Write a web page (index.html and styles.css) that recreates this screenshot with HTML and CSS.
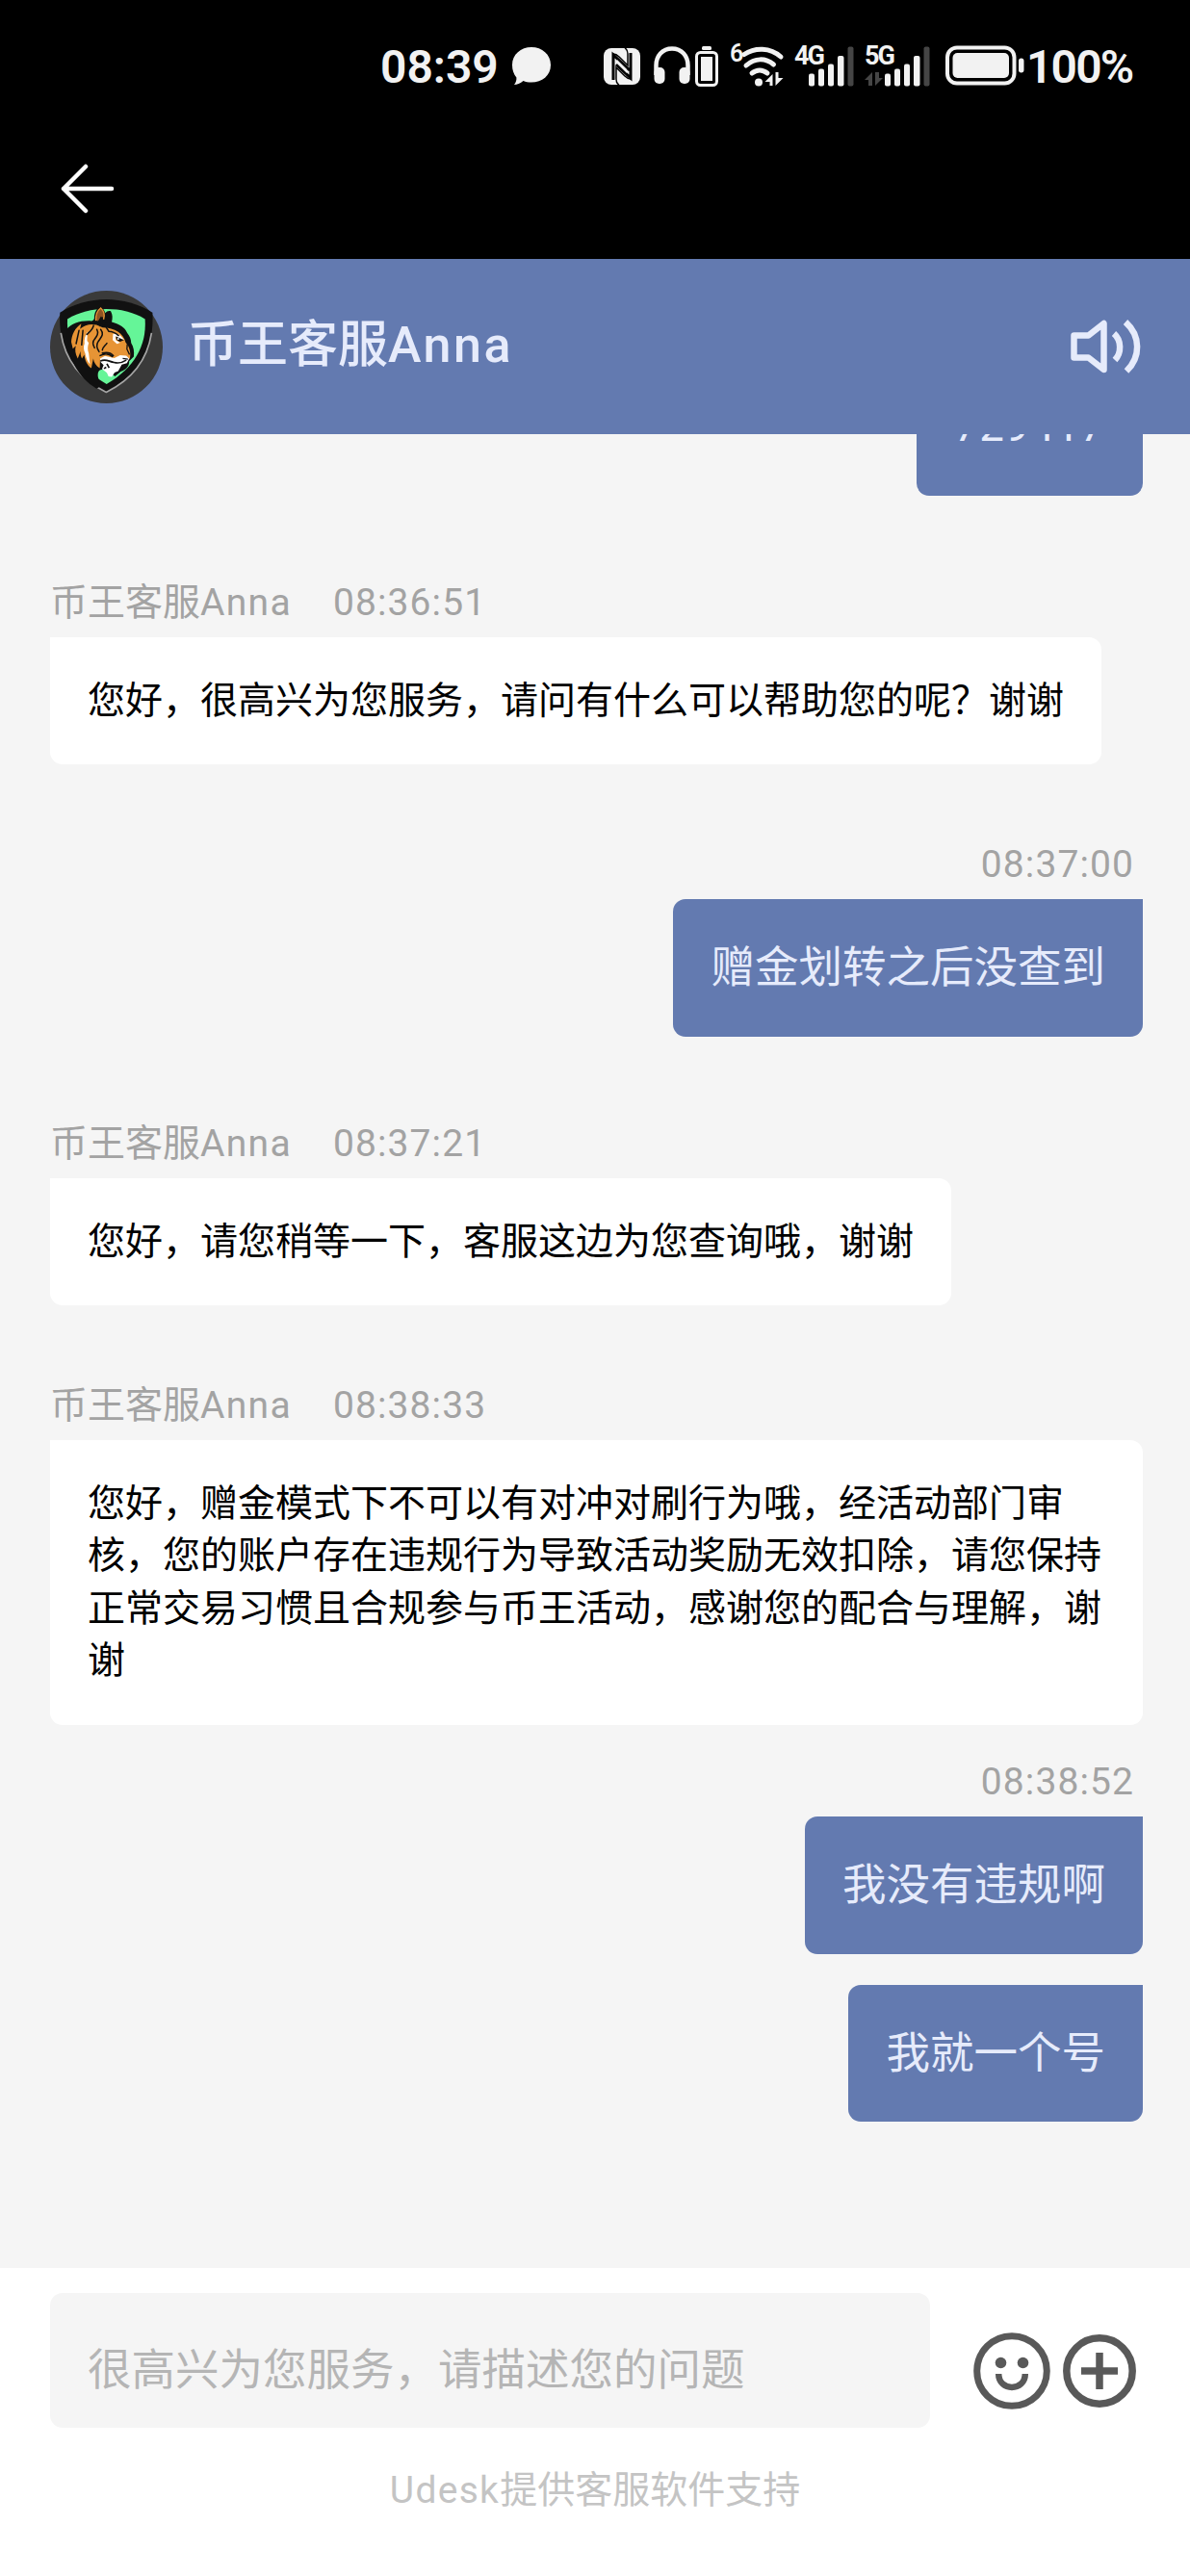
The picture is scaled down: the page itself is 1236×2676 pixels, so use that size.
FILE: index.html
```
<!DOCTYPE html>
<html lang="zh-CN">
<head>
    <meta charset="UTF-8">
    <meta name="viewport" content="width=device-width, initial-scale=1.0">
    <title>币王客服Anna</title>
    <link rel="stylesheet" href="styles.css">
</head>
<body>
    <div class="status-bar">
        <span class="clock">08:39</span>
        <svg class="icon-chat" width="42" height="42" viewBox="0 0 42 42"><path d="M21 2C32 2 41 9.500 41 20.500S32 38.500 21 38.500c-3.500 0-6-.5-8.500-1.500-3 2.500-6.500 4-9.500 4 2-2.500 2.600-4.800 2.400-7.500C2.500 30 1 25.500 1 20.500 1 9.500 10 2 21 2z" fill="#f2f2f2"/></svg>
        <svg class="icon-nfc" width="38" height="38" viewBox="0 0 38 38">
            <rect width="38" height="38" rx="8" fill="#f2f2f2"/>
            <path d="M10 33V7l17 16M28 5v26L13 17" fill="none" stroke="#000" stroke-width="3"/>
            <path d="M10 6c3 0 4 1 6 3l9 9V6c0-3-1-5-3-6M28 32c-3 0-4-1-6-3l-9-9v12c0 3 1 5 3 6" fill="none" stroke="#000" stroke-width="1.500"/>
            <path d="M14 12l10 10v4L14 16z" fill="#f2f2f2"/>
        </svg>
        <svg class="icon-headphones" width="38" height="40" viewBox="0 0 38 40">
            <path d="M2.500 30V20C2.500 10 9 2.500 19 2.500S35.500 10 35.500 20v10" fill="none" stroke="#f2f2f2" stroke-width="4.500"/>
            <rect x="0.500" y="22" width="11" height="17" rx="5" fill="#f2f2f2"/>
            <rect x="26.500" y="22" width="11" height="17" rx="5" fill="#f2f2f2"/>
        </svg>
        <svg class="icon-cell" width="26" height="44" viewBox="0 0 26 44">
            <rect x="8" y="1" width="10" height="4" rx="1.500" fill="#f2f2f2"/>
            <rect x="2.500" y="7.500" width="21" height="34" rx="4" fill="none" stroke="#f2f2f2" stroke-width="3"/>
            <rect x="7" y="12" width="12" height="25" fill="#f2f2f2"/>
        </svg>
        <span class="wifi-gen">6</span>
        <svg class="icon-wifi" width="46" height="44" viewBox="0 0 46 44">
            <g fill="none" stroke="#f2f2f2" stroke-width="5" stroke-linecap="round">
                <path d="M4 9.500C15 2 31 2 42 12"/>
                <path d="M6 21C15 13 26 13 34.500 20"/>
                <path d="M12 29c5-4 11-4 16 0" />
            </g>
            <circle cx="19" cy="38.500" r="4" fill="#f2f2f2"/>
            <path d="M33.500 42V30l-8 8h5v4zM36.500 28v14l8-8h-5v-6z" fill="#f2f2f2"/>
        </svg>
        <span class="net net-4g">4G</span>
        <svg class="icon-signal" width="47" height="42" viewBox="0 0 47 42">
            <rect x="0" y="28.500" width="6" height="13" rx="2" fill="#f2f2f2"/>
            <rect x="10" y="23.500" width="6" height="18" rx="2" fill="#f2f2f2"/>
            <rect x="20" y="18.500" width="6" height="23" rx="2" fill="#f2f2f2"/>
            <rect x="30" y="10" width="6.500" height="31.500" rx="2" fill="#f2f2f2"/>
            <rect x="40.500" y="0.500" width="6" height="41" rx="2" fill="#454545"/>
        </svg>
        <span class="net net-5g">5G
            <svg class="icon-updown" width="20" height="14" viewBox="0 0 20 14"><path d="M8 14V0L0 8h4v6zM11 0v14l8-8h-4V0z" fill="#454545"/></svg>
        </span>
        <svg class="icon-signal" width="47" height="42" viewBox="0 0 47 42">
            <rect x="0" y="28.500" width="6" height="13" rx="2" fill="#f2f2f2"/>
            <rect x="10" y="23.500" width="6" height="18" rx="2" fill="#f2f2f2"/>
            <rect x="20" y="18.500" width="6" height="23" rx="2" fill="#f2f2f2"/>
            <rect x="30" y="10" width="6.500" height="31.500" rx="2" fill="#f2f2f2"/>
            <rect x="40.500" y="0.500" width="6" height="41" rx="2" fill="#454545"/>
        </svg>
        <svg class="icon-battery" width="84" height="42" viewBox="0 0 84 42">
            <rect x="2" y="2.500" width="69.500" height="37" rx="10" fill="none" stroke="#f2f2f2" stroke-width="4"/>
            <rect x="7.500" y="8" width="58.500" height="26" rx="5" fill="#f2f2f2"/>
            <rect x="76" y="13.500" width="5.500" height="15" rx="2.700" fill="#f2f2f2"/>
        </svg>
        <span class="percent">100%</span>
    </div>

    <div class="nav-bar">
        <svg width="56" height="52" viewBox="0 0 56 52"><path d="M53 26H3M26 3L3 26l23 23" fill="none" stroke="#fff" stroke-width="4.500" stroke-linecap="round" stroke-linejoin="round"/></svg>
    </div>

    <header class="agent-bar">
        <svg class="avatar" width="117" height="117" viewBox="-22.500 -28.500 348 348">
            <circle cx="151.500" cy="145.500" r="174" fill="#3a3a3a"/>
            <!-- shield -->
            <path d="M8 39C50 12 100 -2 151 -2s101 14 143 41c6 108-40 198-143 247C48 237 2 147 8 39z" fill="#111"/>
            <path d="M11 102c12 78 56 142 140 183 84-41 128-105 140-183" fill="none" stroke="#a5a5a5" stroke-width="5"/>
            <path d="M31 59c36-22 76-31 120-31s84 9 120 31c5 83-33 150-119 201-86-51-124-118-121-201z" fill="#65f598"/>
            <!-- tiger -->
            <path d="M29 90c15-17 42-27 76-25 5-1 8-4 9-9 0-18 8-32 20-34 8 4 12 11 14 19 5-6 10-8 17-6 6 11 6 22 3 33 26 7 41 17 48 34 8 9 12 20 12 31 8 12 10 27 8 42l-14 14c0 16-10 26-26 32l-18 15-17-14c-19-12-31-7-35 2-3 14 2 26 15 38l-20 12C64 240 30 180 29 90z" fill="#101010"/>
            <path d="M43 130c1-24 12-44 31-57l-4 17c14-13 31-17 51-13l19 8c37 0 65 19 71 46 12 12 17 32 13 50l-16 7-28-3-27-9-21 10-1 25c-12-8-18-18-20-30l-6 30c-14-11-20-25-22-42l-7 12c-4-8-5-15-4-23l-9 23c-8-15-9-26-6-39l-9 9z" fill="#e79435"/>
            <path d="M119 64c-1-18 4-31 15-39 10 9 13 22 9 37l-8-12-9 15z" fill="#8f5424"/>
            <path d="M119 64c-1-18 4-31 15-39 10 9 13 22 9 35" fill="none" stroke="#e79435" stroke-width="4"/>
            <path d="M94 97c-8 13-12 26-10 38-4 8-3 20 2 30 2 15 8 27 15 34l-4-34c-4-10-4-21 0-32l-5-7c0-10 1-18 2-29z" fill="#fff"/>
            <path d="M132 181l15-8 29 7 18-9 19 1 9 9-7 14-16 5-11 20-11 4-9 14-10-2-5-11-15-12 5-12-9-9z" fill="#fff"/>
            <path d="M172 105c14-2 24 3 34 18l-16-3-10-8v12l14 8-10 4-13-12z" fill="#fff"/>
            <path d="M181 113l25 11-12 5c-8-1-13-7-13-16z" fill="#111"/>
            <circle cx="188" cy="120" r="3" fill="#fff"/>
            <path d="M133 189c17-9 26 2 42 4 15 4 24 2 38-7M153 197l7 13M144 212l7-4" fill="none" stroke="#111" stroke-width="5"/>
            <path d="M112 79c-3 14-13 20-21 28M122 91c8 14-3 24-10 35-5 10 0 15 3 22M134 91c13 16-1 26-8 38-8 12-3 22 3 31M67 94l-9 41M79 94l-4 45M132 172c15-8 27-7 38 3M139 164c16-4 27 0 34 8M151 85l8 12c12 0 22 6 30 13M154 73c22 9 32 14 43 26M153 134c-6 8-13 12-14 21M139 55l-5 24 13-7" fill="none" stroke="#111" stroke-width="4.500" stroke-linecap="round"/>
            <path d="M216 137l-1 15 8 17M202 181l16 2" fill="none" stroke="#111" stroke-width="4"/>
        </svg>
        <h1>币王客服<span class="latin">Anna</span></h1>
        <svg class="speaker" width="74" height="58" viewBox="0 0 74 58">
            <g fill="none" stroke="#e6ebfb" stroke-width="6.500">
                <path d="M3.500 17.500h15L34.500 5v48L18.500 40.500h-15z" stroke-linejoin="round"/>
                <path d="M45 15.500c8 7 8 20 1 27.500M57 3.500C73 18 73 40 58 54.500"/>
            </g>
        </svg>
    </header>

    <main class="chat">
        <div class="message own clipped">
            <div class="bubble">729417</div>
        </div>
        <div class="message">
            <div class="meta"><span class="name">币王客服<span class="latin">Anna</span></span><span>08:36:51</span></div>
            <div class="bubble">您好，很高兴为您服务，请问有什么可以帮助您的呢？谢谢</div>
        </div>
        <div class="message own">
            <div class="meta">08:37:00</div>
            <div class="bubble">赠金划转之后没查到</div>
        </div>
        <div class="message">
            <div class="meta"><span class="name">币王客服<span class="latin">Anna</span></span><span>08:37:21</span></div>
            <div class="bubble">您好，请您稍等一下，客服这边为您查询哦，谢谢</div>
        </div>
        <div class="message long">
            <div class="meta"><span class="name">币王客服<span class="latin">Anna</span></span><span>08:38:33</span></div>
            <div class="bubble">您好，赠金模式下不可以有对冲对刷行为哦，经活动部门审核，您的账户存在违规行为导致活动奖励无效扣除，请您保持正常交易习惯且合规参与币王活动，感谢您的配合与理解，谢谢</div>
        </div>
        <div class="message own">
            <div class="meta">08:38:52</div>
            <div class="bubble">我没有违规啊</div>
            <div class="bubble">我就一个号</div>
        </div>
    </main>

    <footer class="composer">
        <div class="input-row">
            <div class="input">很高兴为您服务，请描述您的问题</div>
            <svg class="smile" width="80" height="80" viewBox="0 0 80 80">
                <circle cx="40" cy="40" r="36.300" fill="none" stroke="#595959" stroke-width="7"/>
                <circle cx="28.500" cy="31.500" r="5.800" fill="#595959"/>
                <circle cx="51.500" cy="31.500" r="5.800" fill="#595959"/>
                <path d="M26.200 43c0 18.500 27.600 18.500 27.600 0" fill="none" stroke="#595959" stroke-width="6.500"/>
            </svg>
            <svg class="plus" width="76" height="76" viewBox="0 0 76 76">
                <circle cx="38" cy="38" r="34.200" fill="none" stroke="#595959" stroke-width="7.500"/>
                <path d="M38 19v38M19 38h38" stroke="#595959" stroke-width="7.500"/>
            </svg>
        </div>
        <p class="powered"><span class="latin">Udesk</span>提供客服软件支持</p>
    </footer>
</body>
</html>
```
FILE: styles.css
```
* {
    box-sizing: border-box;
}
body {
    margin: 0;
    height: 2676px;
    display: flex;
    flex-direction: column;
    overflow: hidden;
    background-color: #f5f5f5;
    font-family: Roboto, "Noto Sans CJK SC", sans-serif;
}
svg {
    display: block;
    flex: none;
}
.latin {
    letter-spacing: 1.3px;
}
.status-bar {
    height: 140px;
    padding: 47px 0 0 395px;
    display: flex;
    align-items: flex-start;
    background-color: #000;
    color: #f2f2f2;
    flex: none;
}
.clock {
    width: 136px;
    font-size: 48px;
    font-weight: 600;
    line-height: 45px;
    white-space: nowrap;
}
.icon-nfc {
    margin: 3px 0 0 54px;
}
.icon-headphones {
    margin: 1px 0 0 14px;
}
.icon-cell {
    margin-left: 4px;
}
.wifi-gen {
    width: 13px;
    margin-left: 11px;
    font-size: 25px;
    font-weight: 600;
    line-height: 18px;
}
.icon-wifi {
    margin-left: -2px;
}
.net {
    width: 25px;
    height: 42px;
    font-size: 27px;
    font-weight: 700;
    line-height: 23px;
    letter-spacing: -2px;
    white-space: nowrap;
}
.net-4g {
    width: 15px;
    margin-left: 10px;
}
.net-5g {
    width: 21px;
    margin-left: 11px;
}
.icon-updown {
    margin-top: 5px;
}
.icon-signal {
    margin-top: 1px;
}
.icon-battery {
    margin-left: 16px;
}
.percent {
    margin-left: 0;
    font-size: 48px;
    font-weight: 600;
    line-height: 45px;
    letter-spacing: -1.8px;
}
.nav-bar {
    height: 129px;
    padding: 30px 0 0 63px;
    background-color: #000;
    flex: none;
}
.agent-bar {
    height: 182px;
    padding: 0 50px 0 52px;
    display: flex;
    align-items: center;
    background-color: #637ab0;
    color: #e6ebfb;
    flex: none;
    z-index: 1;
}
.agent-bar h1 {
    margin: 0 auto 2px 26px;
    font-size: 52px;
    font-weight: 500;
    line-height: 72px;
}
.agent-bar .latin {
    letter-spacing: 2.5px;
}
.chat {
    height: 1905px;
    padding: 0 49px 0 52px;
    overflow: hidden;
    flex: none;
}
.message {
    display: flex;
    flex-direction: column;
    align-items: flex-start;
    margin-bottom: 77.5px;
}
.meta {
    height: 50px;
    margin-bottom: 12px;
    display: flex;
    color: #a3a3a3;
    font-size: 39px;
    line-height: 52px;
    letter-spacing: 1.1px;
}
.name {
    width: 294px;
    letter-spacing: 0;
}
.bubble {
    padding: 39px;
    border-radius: 0 13px 13px 13px;
    background-color: #fff;
    color: #000;
    font-size: 39px;
    line-height: 54.6px;
}
.own {
    align-items: flex-end;
    margin-bottom: 85px;
}
.own .meta {
    padding-right: 9px;
    line-height: 53px;
}
.own .bubble {
    padding: 40px 39px 38px;
    border-radius: 13px 0 13px 13px;
    background-color: #637ab0;
    color: #e6ebfb;
    font-size: 45.5px;
    line-height: 64.7px;
}
.own .bubble + .bubble {
    margin-top: 32px;
}
.long {
    margin-bottom: 33px;
}
.clipped {
    margin-top: -79px;
}
.clipped .bubble {
    padding-top: 39px;
    padding-bottom: 39px;
    letter-spacing: 0.6px;
}
.composer {
    height: 320px;
    padding: 26px 56px 0 52px;
    background-color: #fff;
    flex: none;
}
.input-row {
    display: flex;
    align-items: flex-start;
}
.input {
    width: 914px;
    height: 140px;
    padding: 49px 39px 0;
    border-radius: 13px;
    background-color: #f5f5f5;
    color: #b5b5b5;
    font-size: 45.5px;
    line-height: 64px;
}
.smile {
    margin: 41px 0 0 45px;
}
.plus {
    margin: 43px 0 0 13px;
}
.powered {
    margin: 37px 0 0 4px;
    color: #c4c4c4;
    font-size: 39px;
    line-height: 56px;
    text-align: center;
}
```
